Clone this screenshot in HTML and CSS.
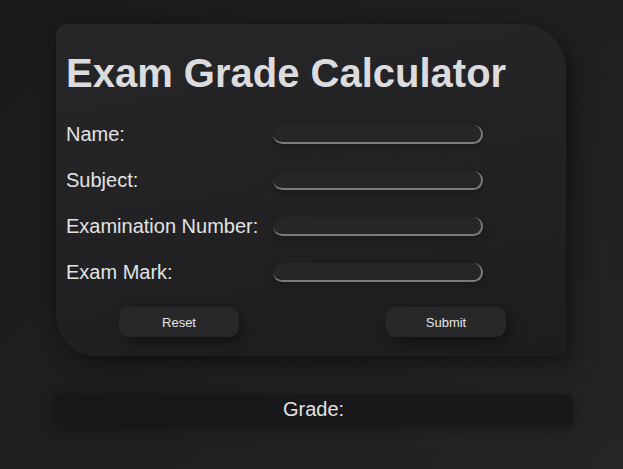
FILE: index.html
```html
<!DOCTYPE html>
<html>
<head>
<meta charset="utf-8">
<link rel="stylesheet" href="styles.css">
</head>
<body>
<main class="page">
  <section class="card">
    <h1 class="title">Exam Grade Calculator</h1>
    <form class="form">
      <div class="row"><label class="label">Name:</label><input class="field" type="text"></div>
      <div class="row"><label class="label">Subject:</label><input class="field" type="text"></div>
      <div class="row"><label class="label">Examination Number:</label><input class="field" type="text"></div>
      <div class="row"><label class="label">Exam Mark:</label><input class="field" type="text"></div>
      <div class="actions">
        <button class="btn" type="button">Reset</button>
        <button class="btn" type="button">Submit</button>
      </div>
    </form>
  </section>
  <div class="grade">Grade:</div>
</main>
</body>
</html>
```

FILE: styles.css
```css
* { box-sizing: border-box; }
html, body { height: 100%; }
body {
  margin: 0;
  font-family: "Liberation Sans", Arial, sans-serif;
  background: linear-gradient(135deg, #1b1b1d 0%, #1f1f21 50%, #252527 100%);
  color: #dedee0;
  overflow: hidden;
}
.page {
  display: flex;
  flex-direction: column;
  padding-top: 24px;
}
.card {
  margin-left: 56px;
  width: 510px;
  height: 332px;
  padding: 26px 10px 0 10px;
  border-radius: 10px 45px 10px 40px;
  background: linear-gradient(170deg, #262628 0%, #232325 45%, #1d1d1f 100%);
  box-shadow: 10px 10px 24px rgba(0,0,0,0.35), -3px 0 12px rgba(0,0,0,0.18);
}
.title {
  margin: 0;
  font-size: 40px;
  line-height: 46px;
  font-weight: bold;
  color: #dcdcde;
}
.form {
  margin-top: 15px;
  display: flex;
  flex-direction: column;
}
.row {
  display: flex;
  align-items: center;
  height: 46px;
}
.label {
  width: 207px;
  font-size: 20px;
  color: #e2e2e4;
}
.field {
  width: 210px;
  height: 19px;
  padding: 0;
  background: #262628;
  border: none;
  border-right: 2px solid #7b7b7d;
  border-bottom: 2px solid #7b7b7d;
  border-radius: 10px;
  box-shadow: 0 3px 10px rgba(0,0,0,0.25);
  outline: none;
}
.actions {
  display: flex;
  justify-content: space-between;
  padding: 12px 50px 0 53px;
}
.btn {
  width: 120px;
  height: 30px;
  border: none;
  border-radius: 10px;
  background: #28282a;
  color: #e4e4e6;
  font-family: "Liberation Sans", Arial, sans-serif;
  font-size: 13px;
  box-shadow: 4px 6px 14px rgba(0,0,0,0.4);
}
.grade {
  margin-top: 38px;
  margin-left: 54px;
  width: 519px;
  height: 31px;
  border-radius: 5px;
  background: #18181a;
  box-shadow: 0 4px 14px rgba(0,0,0,0.35);
  display: flex;
  align-items: center;
  justify-content: center;
  font-size: 20px;
  color: #e2e2e4;
}
```
